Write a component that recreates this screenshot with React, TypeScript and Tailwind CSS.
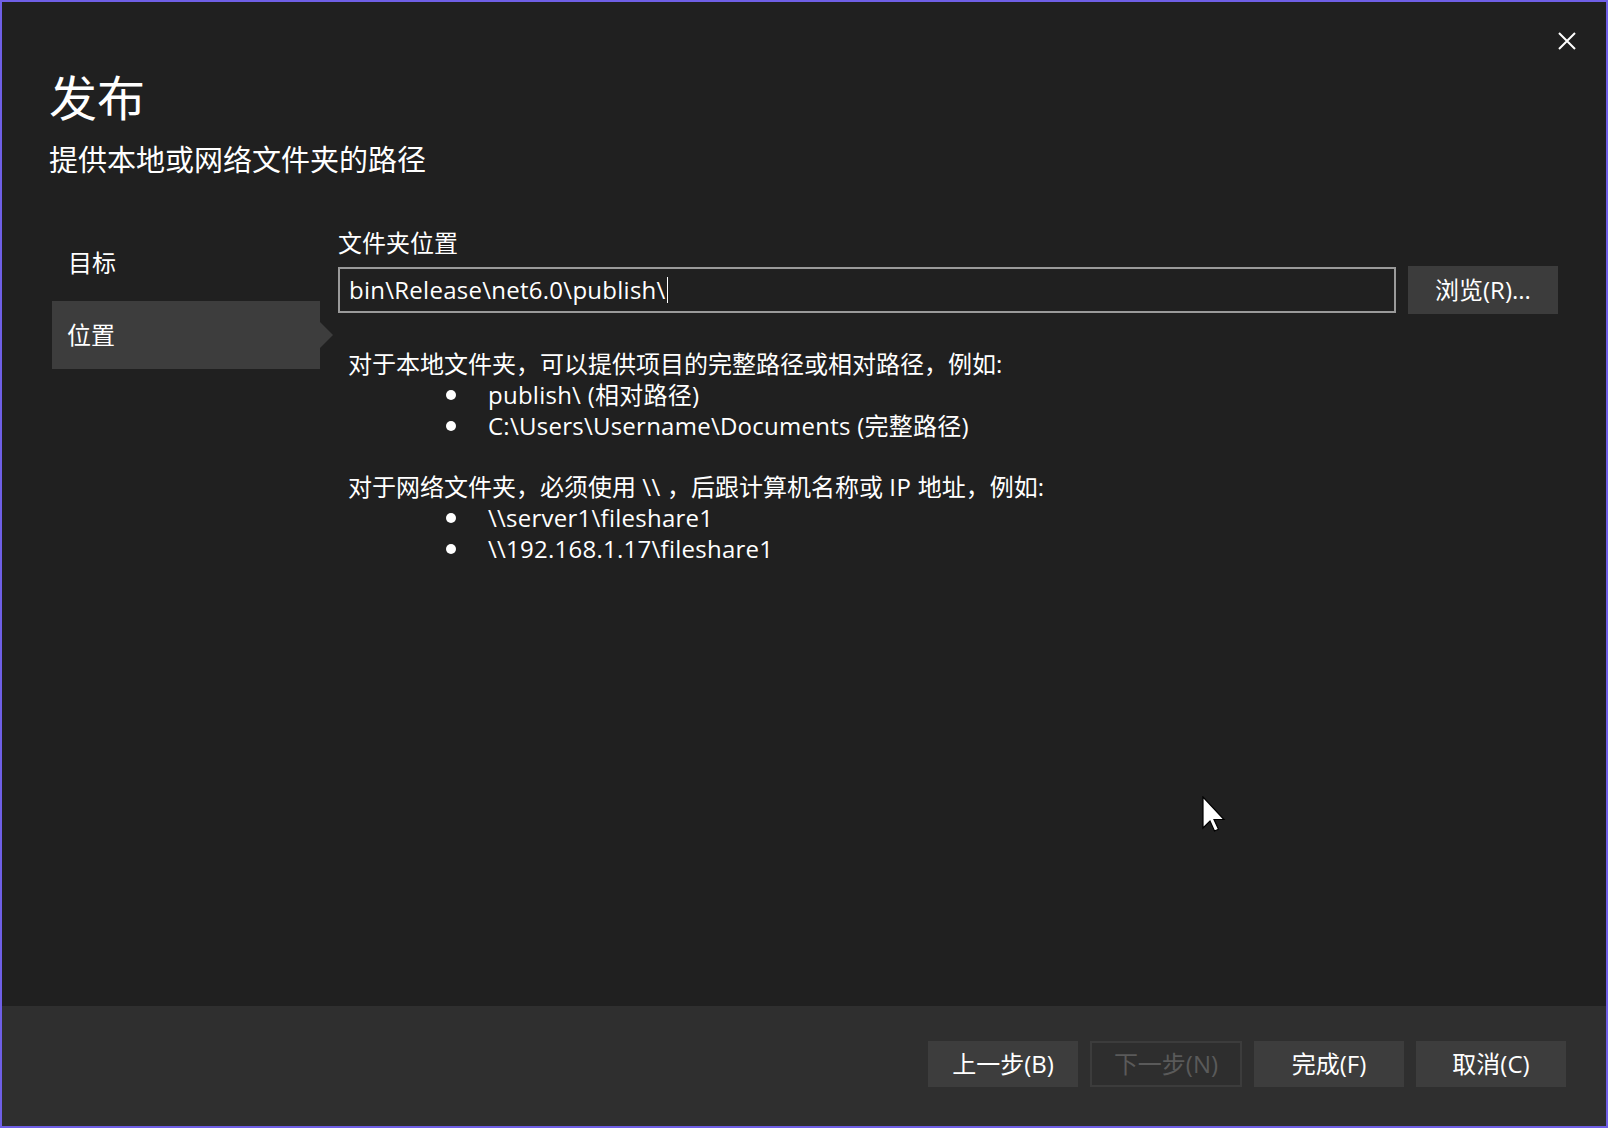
import React from "react";

const FONT = { fontFamily: '"Open Sans", "Noto Sans CJK SC", sans-serif' };

function Bullet({ children }: { children: React.ReactNode }) {
  return (
    <div className="flex items-center">
      <span className="ml-[98px] w-[10px] h-[10px] rounded-full bg-white shrink-0" />
      <span className="ml-[32px] tracking-[0.25px]">{children}</span>
    </div>
  );
}

function FooterButton({ label, disabled }: { label: string; disabled?: boolean }) {
  return (
    <button
      className={
        disabled
          ? "w-[152px] h-[46px] border-2 border-[#3c3c3c] bg-[#2e2e2e] text-[#5a5a5a] text-[24px] leading-[32px] flex items-center justify-center"
          : "w-[150px] h-[46px] bg-[#3d3d3d] text-white text-[24px] leading-[32px] flex items-center justify-center"
      }
    >
      {label}
    </button>
  );
}

export default function App() {
  return (
    <div
      className="relative w-[1608px] h-[1128px] border-2 border-[#6f5fe6] bg-[#202020] text-white flex flex-col overflow-hidden"
      style={FONT}
    >
      {/* Header */}
      <div className="flex justify-between">
        <div className="pt-[72px] pl-[47px]">
          <h1 className="text-[48px] leading-[48px] font-normal">发布</h1>
          <div className="mt-[20px] text-[29px] leading-[36px]">提供本地或网络文件夹的路径</div>
        </div>
        <button className="mt-[29px] mr-[29px] w-[20px] h-[20px] flex items-center justify-center">
          <svg width="20" height="18" viewBox="0 0 20 18">
            <path d="M2 1 L18 17 M18 1 L2 17" stroke="white" strokeWidth="2" fill="none" />
          </svg>
        </button>
      </div>

      {/* Body */}
      <div className="flex-1 flex mt-[50px] pl-[50px] pr-[48px]">
        <div className="w-[268px] flex flex-col pt-[3px] gap-[2px] shrink-0">
          <div className="h-[68px] flex items-center pl-[16px] pb-[4px] text-[24px] leading-[32px]">目标</div>
          <div className="relative h-[68px] flex items-center pl-[15px] bg-[#3d3d3d] text-[24px] leading-[32px]">
            位置
            <span className="absolute left-full top-1/2 -translate-y-1/2 w-0 h-0 border-y-[13px] border-y-transparent border-l-[13px] border-l-[#3d3d3d]" />
          </div>
        </div>

        <div className="flex-1 ml-[18px] flex flex-col">
          <div className="text-[24px] leading-[32px] -mt-[1px]">文件夹位置</div>
          <div className="mt-[7px] flex items-center gap-[12px]">
            <div className="flex-1 h-[46px] border-2 border-[#9a9a9a] pl-[9px] flex items-center text-[24px] leading-[32px]">
              <span className="tracking-[0.26px]">bin\Release\net6.0\publish\</span>
              <span className="inline-block w-[1.5px] h-[26px] bg-white ml-[1px]" />
            </div>
            <button className="w-[150px] h-[48px] bg-[#3c3c3c] text-white text-[24px] leading-[32px] flex items-center justify-center">
              浏览(R)...
            </button>
          </div>

          <div className="mt-[35px] pl-[10px] text-[24px] leading-[30.8px]">
            <div>对于本地文件夹，可以提供项目的完整路径或相对路径，例如:</div>
            <Bullet>publish\ (相对路径)</Bullet>
            <Bullet>C:\Users\Username\Documents (完整路径)</Bullet>
            <div className="h-[30.8px]" />
            <div>
              对于网络文件夹，必须使用 <span className="tracking-[0.5px]">\\</span> ，后跟计算机名称或 <span className="tracking-[0.5px]">IP</span> 地址，例如:
            </div>
            <Bullet>\\server1\fileshare1</Bullet>
            <Bullet>\\192.168.1.17\fileshare1</Bullet>
          </div>
        </div>
      </div>

      {/* Footer */}
      <div className="h-[120px] bg-[#2f2f2f] flex items-center justify-end gap-[12px] pr-[40px] pb-[5px]">
        <FooterButton label="上一步(B)" />
        <FooterButton label="下一步(N)" disabled />
        <FooterButton label="完成(F)" />
        <FooterButton label="取消(C)" />
      </div>

      {/* Mouse cursor overlay */}
      <svg
        className="absolute left-[1200px] top-[794px]"
        width="26"
        height="38"
        viewBox="0 0 26 38"
      >
        <path
          d="M1 1 L1 32 L8 25 L12.5 35 L16.5 33.2 L12 23.5 L22 23.5 Z"
          fill="white"
          stroke="black"
          strokeWidth="1.2"
          strokeLinejoin="miter"
        />
      </svg>
    </div>
  );
}
